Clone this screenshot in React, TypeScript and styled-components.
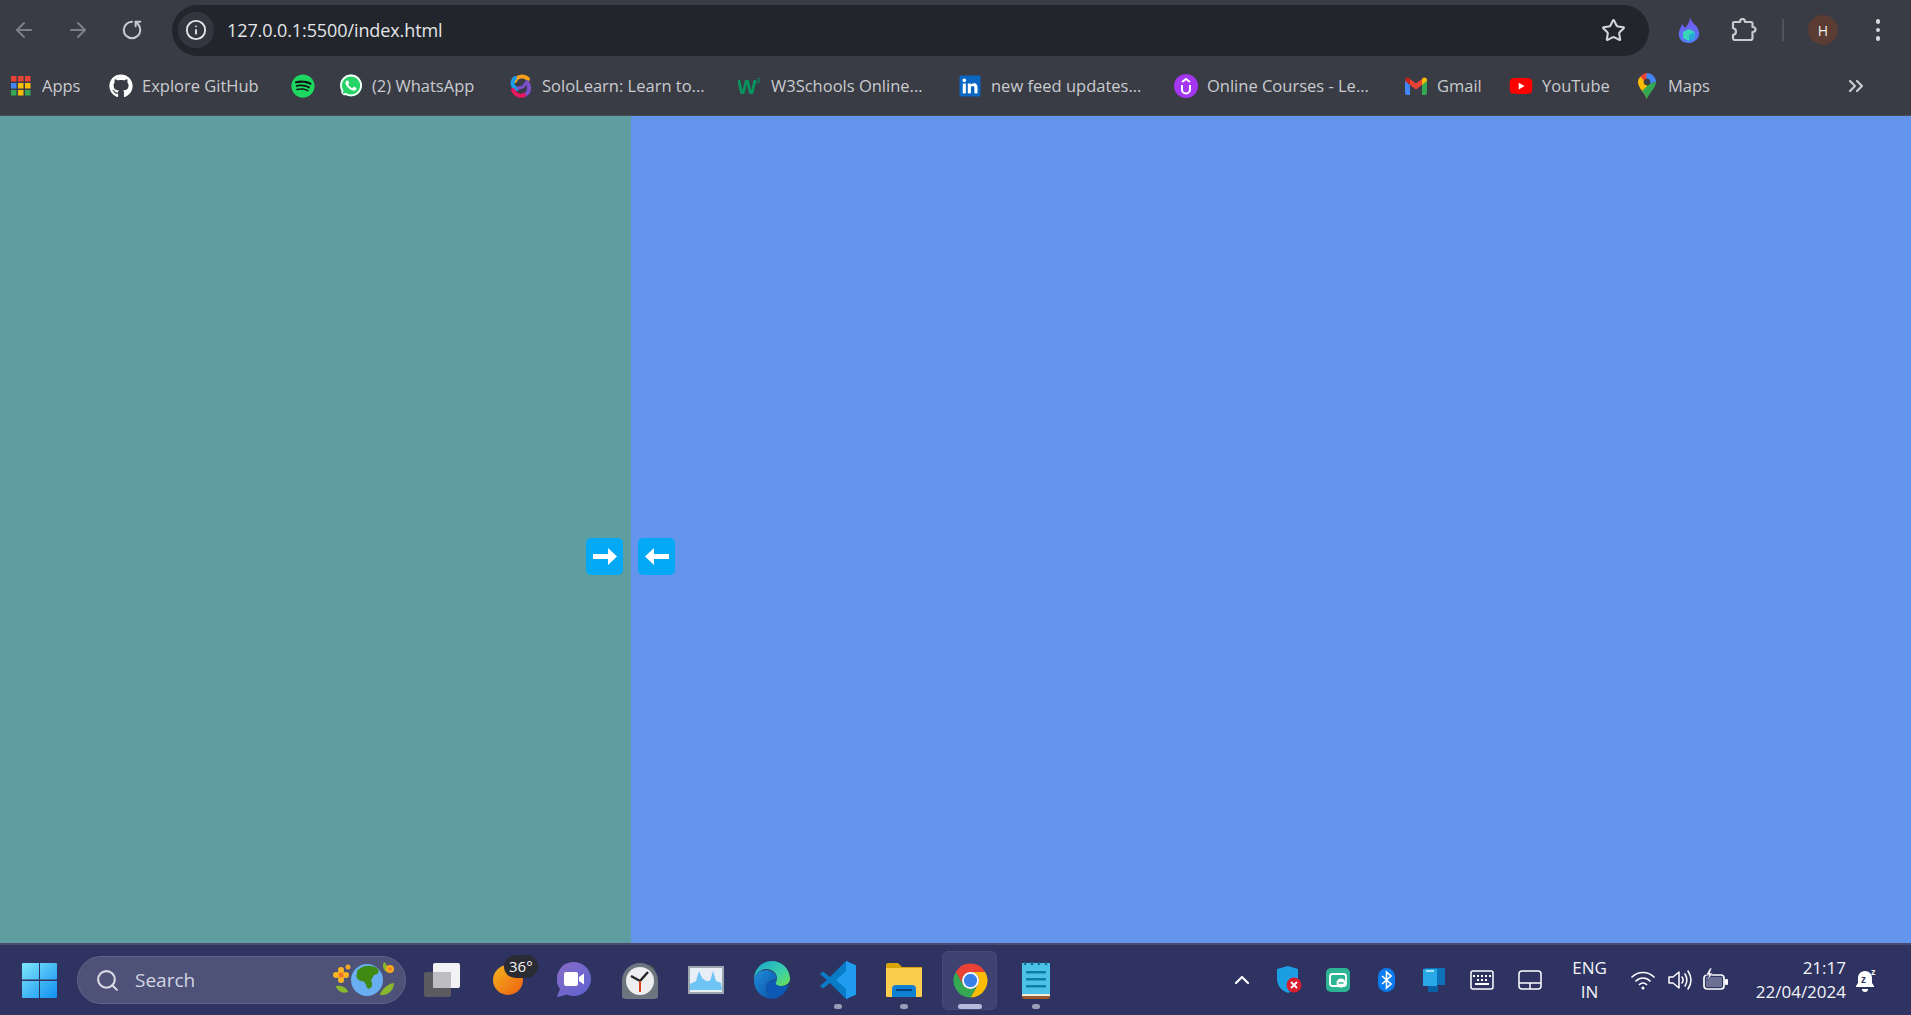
import React from "react";
import styled, { createGlobalStyle } from "styled-components";
import { ChevronUp, Search, RotateCw, ArrowLeft, ArrowRight, Star, ChevronsRight, Info } from "lucide-react";
import { FaGithub, FaSpotify, FaWhatsapp, FaLinkedin, FaYoutube } from "react-icons/fa";

const GlobalStyle = createGlobalStyle`
  html, body { margin: 0; padding: 0; height: 100%; overflow: hidden; }
  body { font-family: "Open Sans", "Noto Sans", sans-serif; }
  #root { height: 100vh; display: flex; flex-direction: column; }
`;

const Toolbar = styled.div`
  height: 60px;
  flex: none;
  display: flex;
  align-items: center;
  gap: 6px;
  background: #393c45;
`;
const NavButton = styled.div<{ $dim?: boolean }>`
  width: 48px;
  height: 48px;
  display: flex;
  align-items: center;
  justify-content: center;
  color: ${(p) => (p.$dim ? "#7c7f86" : "#c8cacf")};
`;
const AddressBar = styled.div`
  flex: 1;
  height: 51px;
  margin-left: 10px;
  padding: 0 6px;
  display: flex;
  align-items: center;
  background: #22252c;
  border-radius: 26px;
  color: #e6e8ec;
`;
const InfoChip = styled.div`
  width: 36px;
  height: 36px;
  border-radius: 50%;
  background: #33363e;
  display: flex;
  align-items: center;
  justify-content: center;
`;
const Url = styled.div`
  margin-left: 13px;
  flex: 1;
  font-size: 18px;
  letter-spacing: -0.1px;
  color: #e3e5e8;
`;
const StarSlot = styled.div`
  width: 48px;
  display: flex;
  justify-content: center;
  padding-right: 6px;
  color: #d4d6da;
`;
const Actions = styled.div`
  width: 262px;
  margin-left: -6px;
  flex: none;
  display: flex;
  align-items: center;
`;
const ActionSlot = styled.div<{ $w: number }>`
  width: ${(p) => p.$w}px;
  display: flex;
  justify-content: center;
  align-items: center;
`;
const Divider = styled.div`
  width: 2px;
  height: 22px;
  background: #50535c;
`;
const Avatar = styled.div`
  width: 30px;
  height: 30px;
  border-radius: 50%;
  background: #5b3c33;
  color: #f2eeee;
  display: flex;
  align-items: center;
  justify-content: center;
  font-size: 14px;
`;
const Dots = styled.div`
  display: flex;
  flex-direction: column;
  gap: 4px;
  padding-left: 6px;
  i {
    width: 4.5px;
    height: 4.5px;
    border-radius: 50%;
    background: #d6d8dc;
    display: block;
  }
`;

const BookmarkBar = styled.div`
  height: 56px;
  flex: none;
  display: flex;
  align-items: center;
  gap: 24px;
  padding: 0 0 4px 9px;
  box-sizing: border-box;
  background: #393c45;
  border-bottom: 1px solid #4a4d55;
  position: relative;
`;
const Bookmark = styled.div`
  display: flex;
  align-items: center;
  gap: 9px;
`;
const BookmarkIcon = styled.div`
  width: 24px;
  height: 24px;
  flex: none;
  display: flex;
  align-items: center;
  justify-content: center;
`;
const BookmarkLabel = styled.span<{ $w: number }>`
  width: ${(p) => p.$w}px;
  font-size: 16.5px;
  color: #c9cbcf;
  white-space: nowrap;
`;
const Overflow = styled.div`
  margin-left: auto;
  margin-right: 43px;
  color: #c9cbcf;
  display: flex;
`;

const Main = styled.div`
  flex: 1;
  display: flex;
  min-height: 0;
`;
const Panel = styled.div<{ $color: string; $wide?: boolean }>`
  position: relative;
  background: ${(p) => p.$color};
  ${(p) => (p.$wide ? "flex: 1;" : "width: 631px;")}
`;
const ArrowButton = styled.button<{ $side: "left" | "right" }>`
  position: absolute;
  top: 422px;
  ${(p) => (p.$side === "left" ? "right: 8px;" : "left: 7px;")}
  width: 37px;
  height: 37px;
  padding: 0;
  border: none;
  border-radius: 5px;
  background: #03a9f4;
  display: flex;
  align-items: center;
  justify-content: center;
`;

const Taskbar = styled.div`
  height: 72px;
  flex: none;
  display: flex;
  align-items: center;
  box-sizing: border-box;
  background: #2e3362;
  border-top: 2px solid #484b6e;
  color: #fff;
`;
const StartSlot = styled.div`
  width: 77px;
  flex: none;
  display: flex;
  padding-left: 22px;
  box-sizing: border-box;
`;
const SearchPill = styled.div`
  width: 329px;
  height: 48px;
  flex: none;
  margin-right: 3px;
  box-sizing: border-box;
  border: 1px solid #62658a;
  border-radius: 24px;
  background: #4e5279;
  display: flex;
  align-items: center;
  padding: 0 7px 0 17px;
  color: #d9dae4;
`;
const SearchText = styled.span`
  flex: 1;
  margin-left: 15px;
  font-size: 19px;
  color: #d5d6e2;
`;
const AppSlot = styled.div<{ $active?: boolean }>`
  position: relative;
  width: 66px;
  height: 60px;
  flex: none;
  display: flex;
  align-items: center;
  justify-content: center;
  &::before {
    content: "";
    display: ${(p) => (p.$active ? "block" : "none")};
    position: absolute;
    left: 5px;
    right: 6px;
    top: 1px;
    bottom: 0;
    background: #3e4270;
    border: 1px solid #464a76;
    border-radius: 6px;
  }
  svg {
    position: relative;
  }
`;
const RunDot = styled.span<{ $active?: boolean }>`
  position: absolute;
  bottom: 1px;
  left: 50%;
  transform: translateX(-50%);
  width: ${(p) => (p.$active ? 24 : 8)}px;
  height: 5px;
  border-radius: 3px;
  background: ${(p) => (p.$active ? "#b6bbdc" : "#9a9db6")};
`;
const TempBadge = styled.span`
  position: absolute;
  top: 5px;
  left: 29px;
  padding: 0 5px;
  height: 23px;
  line-height: 23px;
  font-size: 15px;
  border-radius: 12px;
  background: #2b2b33;
  color: #f3f3f3;
`;
const Spacer = styled.div`
  flex: 1;
`;
const TraySlot = styled.div<{ $w: number }>`
  width: ${(p) => p.$w}px;
  flex: none;
  display: flex;
  justify-content: center;
  align-items: center;
`;
const TwoLine = styled.div<{ $w: number; $align: string }>`
  width: ${(p) => p.$w}px;
  flex: none;
  display: flex;
  flex-direction: column;
  align-items: ${(p) => p.$align};
  font-size: 17px;
  line-height: 24px;
  color: #f4f4f8;
  white-space: nowrap;
`;
const BellSlot = styled.div`
  flex: none;
  width: 65px;
  padding-left: 10px;
  box-sizing: border-box;
  display: flex;
`;

const bookmarks = [
  { label: "Apps", w: 43, icon: <AppsIcon /> },
  { label: "Explore GitHub", w: 125, icon: <FaGithub size={24} color="#fff" /> },
  { icon: <FaSpotify size={24} color="#1ed760" style={{ background: "radial-gradient(circle, #111 60%, transparent 62%)", borderRadius: "50%" }} /> },
  {
    label: "(2) WhatsApp",
    w: 113,
    icon: <FaWhatsapp size={25} color="#fff" style={{ background: "radial-gradient(circle, #25d366 62%, transparent 65%)", borderRadius: "50%" }} />,
  },
  { label: "SoloLearn: Learn to...", w: 172, icon: <SoloIcon /> },
  { label: "W3Schools Online...", w: 163, icon: <W3Icon /> },
  {
    label: "new feed updates...",
    w: 159,
    icon: <FaLinkedin size={24} color="#0a66c2" style={{ background: "linear-gradient(#fff,#fff) center/70% 70% no-repeat" }} />,
  },
  { label: "Online Courses - Le...", w: 173, icon: <UdemyIcon /> },
  { label: "Gmail", w: 48, icon: <GmailIcon /> },
  {
    label: "YouTube",
    w: 69,
    icon: <FaYoutube size={24} color="#f00" style={{ background: "linear-gradient(#fff,#fff) center/40% 40% no-repeat" }} />,
  },
  { label: "Maps", w: 45, icon: <MapsIcon /> },
];

function AppsIcon() {
  const colors = ["#ea4335", "#ea4335", "#ea4335", "#4285f4", "#fbbc05", "#fbbc05", "#34a853", "#fbbc05", "#34a853"];
  return (
    <svg width="20" height="20" viewBox="0 0 20 20">
      {colors.map((c, i) => (
        <rect key={i} x={(i % 3) * 7} y={Math.floor(i / 3) * 7} width="5.5" height="5.5" fill={c} />
      ))}
    </svg>
  );
}
function SoloIcon() {
  return (
    <svg width="26" height="26" viewBox="0 0 24 24" fill="none" strokeWidth="4" strokeLinecap="round">
      <path d="M19 5C15 1 8 2 6 7" stroke="#f9a11b" />
      <path d="M6 4C2 8 3 13 8 15" stroke="#1e9be8" />
      <path d="M18 8c4 5 2 12-3 13" stroke="#7b4fc9" />
      <path d="M4 16c2 5 8 7 11 5" stroke="#e6175c" />
      <path d="M9 14c3 0 6-1 7-4" stroke="#7b4fc9" strokeWidth="3" />
    </svg>
  );
}
function W3Icon() {
  return (
    <svg width="24" height="22" viewBox="0 0 24 22">
      <text x="-1" y="19" fontFamily="'Liberation Sans', sans-serif" fontWeight="700" fontSize="21" fill="#04965f">W</text>
      <text x="18" y="8" fontFamily="'Liberation Sans', sans-serif" fontSize="8" fill="#04965f">3</text>
    </svg>
  );
}
function UdemyIcon() {
  return (
    <svg width="24" height="24" viewBox="0 0 24 24" fill="none">
      <circle cx="12" cy="12" r="12" fill="#a435f0" />
      <path d="M8 11v4.5a4 4 0 0 0 8 0V11" stroke="#fff" strokeWidth="2" />
      <path d="M8 8l4-3 4 3" stroke="#fff" strokeWidth="2" />
    </svg>
  );
}
function GmailIcon() {
  return (
    <svg width="22" height="18" viewBox="0 0 22 18" fill="none">
      <path d="M0 3v13a2 2 0 0 0 2 2h3V8z" fill="#4285f4" />
      <path d="M22 3v13a2 2 0 0 1-2 2h-3V8z" fill="#34a853" />
      <path d="M5 8l6 4.5L17 8V2l-6 4.5L5 2z" fill="#ea4335" />
      <path d="M0 3c0-2.5 3-3.5 5-1v6L0 4z" fill="#c5221f" />
      <path d="M22 3c0-2.5-3-3.5-5-1v6l5-4z" fill="#fbbc04" />
    </svg>
  );
}
function MapsIcon() {
  return (
    <svg width="18" height="26" viewBox="0 0 18 26">
      <path d="M9 26C7 20 0 15 0 9c0-2 1-4 2.5-5.500L9 9z" fill="#fbbc04" />
      <path d="M2.500 3.500C4 1.500 6.500 0 9 0l1 4-4 4z" fill="#ea4335" />
      <path d="M9 0c2.500 0 5 1 6.500 3L11 8 8 4z" fill="#4285f4" />
      <path d="M15.500 3C17 4.500 18 7 18 9L11 11l-1-4z" fill="#4285f4" />
      <path d="M18 9c0 6-7 11-9 17-1-3-3-6-5-8l7-7z" fill="#34a853" />
      <circle cx="9" cy="9" r="3.300" fill="#3a3d46" />
    </svg>
  );
}
function FlameIcon() {
  return (
    <svg width="22" height="26" viewBox="0 0 22 26">
      <defs>
        <linearGradient id="flame" x1="0" y1="0" x2="0" y2="1">
          <stop offset="0" stopColor="#7a54f2" />
          <stop offset="1" stopColor="#4f7df5" />
        </linearGradient>
      </defs>
      <path d="M12 0c1 5 4 6 7 10 3 5 3 10-1 13-2 2-4 3-7 3-5 0-9-2-10-7C0 14 3 11 4 7c1 1 2 3 3 4 3-3 5-7 5-11z" fill="url(#flame)" />
      <path d="M11 12l6 3v6l-6 3-6-3v-6z" fill="#38d6b8" />
      <path d="M11 18l6-3v6l-6 3z" fill="#28a8d8" />
    </svg>
  );
}
function PuzzleIcon() {
  return (
    <svg width="26" height="24" viewBox="0 0 26 24" fill="none" stroke="#c8cacf" strokeWidth="2.200" strokeLinejoin="round">
      <path d="M3 4h6c0-4 5-4 5 0h6a1.500 1.500 0 0 1 1.500 1.500V9c4 0 4 5 0 5v6a2 2 0 0 1-2 2H4a2 2 0 0 1-2-2v-3c4-1 4-6 0-7V5a1 1 0 0 1 1-1z" />
    </svg>
  );
}
function WindowsLogo() {
  return (
    <svg width="35" height="35" viewBox="0 0 35 35">
      <defs>
        <linearGradient id="win" x1="0" y1="0" x2="1" y2="1">
          <stop offset="0" stopColor="#7fe6fb" />
          <stop offset="1" stopColor="#0f8ff0" />
        </linearGradient>
      </defs>
      <path d="M1 0h16v16.500H0V1a1 1 0 0 1 1-1zM18 0h16a1 1 0 0 1 1 1v15.500H18zM0 18h17v17H1a1 1 0 0 1-1-1zM18 18h17v16a1 1 0 0 1-1 1H18z" fill="url(#win)" />
    </svg>
  );
}
function EarthIcon() {
  return (
    <svg width="68" height="36" viewBox="0 0 68 36">
      <circle cx="11" cy="13" r="4" fill="#f7a41d" />
      <circle cx="6" cy="13" r="3" fill="#fbb524" />
      <circle cx="16" cy="13" r="3" fill="#fbb524" />
      <circle cx="11" cy="8" r="3" fill="#fbb524" />
      <circle cx="11" cy="18" r="3" fill="#fbb524" />
      <circle cx="11" cy="13" r="2.500" fill="#f0762a" />
      <circle cx="18" cy="5" r="2.500" fill="#f8a81f" />
      <path d="M6 24c6-1 11 2 12 6-6 2-11-1-12-6z" fill="#8ab82c" />
      <circle cx="37" cy="18" r="16" fill="#69aef0" />
      <path d="M27 9c5-6 15-7 21-2 2 3-1 6-4 6-1 3-4 4-2 8 1 4-3 7-5 5-1-4-2-7-6-7-3-1-6-4-4-7z" fill="#3f8a13" />
      <path d="M54 0c3 2 4 6 3 10-4-2-5-6-3-10zM50 33c1-5 7-11 14-12 0 7-6 13-14 12z" fill="#8ab82c" />
      <circle cx="60" cy="7" r="4" fill="#f8a81f" />
      <circle cx="60" cy="7" r="1.800" fill="#ef7b2b" />
    </svg>
  );
}
function TaskViewIcon() {
  return (
    <svg width="36" height="34" viewBox="0 0 36 34">
      <rect x="0" y="9" width="27" height="25" rx="2" fill="#5b5b5f" />
      <rect x="9" y="0" width="27" height="25" rx="2" fill="#f2f2f4" />
      <rect x="9" y="9" width="18" height="16" fill="#bdbdc2" />
    </svg>
  );
}
function SunIcon() {
  return (
    <svg width="30" height="30" viewBox="0 0 30 30">
      <defs>
        <linearGradient id="sun" x1="0" y1="0" x2="1" y2="1">
          <stop offset="0" stopColor="#f4b51f" />
          <stop offset="1" stopColor="#ee5f0f" />
        </linearGradient>
      </defs>
      <circle cx="15" cy="15" r="15" fill="url(#sun)" />
    </svg>
  );
}
function MeetIcon() {
  return (
    <svg width="34" height="36" viewBox="0 0 34 36">
      <defs>
        <linearGradient id="meet" x1="0" y1="0" x2="1" y2="1">
          <stop offset="0" stopColor="#8a6cc8" />
          <stop offset="1" stopColor="#5c62d0" />
        </linearGradient>
      </defs>
      <path d="M17 0a17 17 0 1 1-7 32.500L1 35c-1 .3-1-.5-.7-1L3 27A17 17 0 0 1 17 0z" fill="url(#meet)" />
      <rect x="7" y="10" width="14" height="14" rx="2" fill="#fff" />
      <path d="M22 15l5-3.500v11L22 19z" fill="#fff" />
    </svg>
  );
}
function ClockIcon() {
  return (
    <svg width="36" height="37" viewBox="0 0 36 37">
      <path d="M28 2l5 4-2 3-5-4z" fill="#3d4046" />
      <path d="M18 1c10 0 18 8 18 18v15a3 3 0 0 1-3 3H3a3 3 0 0 1-3-3V19C0 9 8 1 18 1z" fill="#6d767e" />
      <circle cx="18" cy="19" r="14" fill="#eeeef0" />
      <path d="M18 19L9 14M18 19l8-9" stroke="#25272b" strokeWidth="2.500" />
      <path d="M18 19v11" stroke="#d8421a" strokeWidth="2" />
    </svg>
  );
}
function ResourceIcon() {
  return (
    <svg width="36" height="28" viewBox="0 0 36 28">
      <rect x="0" y="0" width="36" height="28" fill="#9ba6b1" />
      <rect x="2" y="2" width="32" height="24" fill="#e8eef6" />
      <path d="M2 24V18l6-3 3-10 3 7 4 3 4 0 3-10 3 10 5 2 1 7z" fill="#6ec4f4" />
    </svg>
  );
}
function EdgeIcon() {
  return (
    <svg width="36" height="38" viewBox="0 0 36 38">
      <defs>
        <linearGradient id="edgeA" x1="0" y1="0" x2="1" y2="1">
          <stop offset="0" stopColor="#18a4d2" />
          <stop offset="0.6" stopColor="#3bd0a8" />
          <stop offset="1" stopColor="#6fe04f" />
        </linearGradient>
        <linearGradient id="edgeB" x1="0" y1="0" x2="1" y2="1">
          <stop offset="0" stopColor="#1f8ed8" />
          <stop offset="1" stopColor="#0c4fa8" />
        </linearGradient>
      </defs>
      <path d="M18 0c10 0 18 8 18 18 0 4-4 7-9 7-4 0-6-1-6-3 0-1 2-1 2-5 0-5-5-9-11-9C7 8 1 13 0 19 0 8 8 0 18 0z" fill="url(#edgeA)" />
      <path d="M0 19C1 13 6 9 12 9c6 0 11 4 11 9-5 1-12 3-11 10 0 4 3 8 7 10C8 38 0 30 0 19z" fill="url(#edgeB)" />
      <path d="M12 27c0-5 5-8 10-8 1 1-1 3 0 4 2 3 9 3 13 0-2 8-9 14-16 15-4-2-7-6-7-11z" fill="#0c59b5" />
    </svg>
  );
}
function VsCodeIcon() {
  return (
    <svg width="36" height="38" viewBox="0 0 36 38">
      <path d="M26 0l10 4.500v29L26 38 10 22 3 27.500 0 25l7-6-7-6 3-2.500L10 16z" fill="#0a7cc7" />
      <path d="M26 0l10 4.500v29L26 38zM26 10l-10 9 10 9z" fill="#1f9cf0" fillRule="evenodd" />
    </svg>
  );
}
function FolderIcon() {
  return (
    <svg width="36" height="34" viewBox="0 0 36 34">
      <path d="M0 2a2 2 0 0 1 2-2h10l4 4h20v8H0z" fill="#dba30a" />
      <rect x="0" y="5" width="36" height="29" rx="1" fill="#fdcd4f" />
      <path d="M6 34V26a4 4 0 0 1 4-4h16a4 4 0 0 1 4 4v8z" fill="#0e7fd1" />
      <rect x="10" y="26" width="16" height="2" fill="#083f7d" />
    </svg>
  );
}
function ChromeIcon() {
  return (
    <svg width="37" height="37" viewBox="0 0 24 24">
      <path d="M2.470 6.500A11 11 0 0 1 21.530 6.500H12a5.500 5.500 0 0 0-4.760 8.250z" fill="#ea4335" />
      <path d="M21.530 6.500A11 11 0 0 1 12 23l4.760-8.250A5.500 5.500 0 0 0 12 6.500z" fill="#fbbc04" />
      <path d="M12 23A11 11 0 0 1 2.470 6.500l4.770 8.250a5.500 5.500 0 0 0 9.520 0z" fill="#34a853" />
      <circle cx="12" cy="12" r="5.500" fill="#fff" />
      <circle cx="12" cy="12" r="4.300" fill="#3a7fe8" />
    </svg>
  );
}
function NotepadIcon() {
  return (
    <svg width="28" height="38" viewBox="0 0 28 38">
      <rect x="0" y="2" width="28" height="32" fill="#4cc2e6" />
      <path d="M0 34h28v2a2 2 0 0 1-2 2H2a2 2 0 0 1-2-2z" fill="#9a5a2e" />
      <rect x="0" y="33" width="28" height="2" fill="#f3e8dc" />
      {[3, 10, 17, 24].map((x) => (
        <path key={x} d="M0 4l1.500-4L3 4z" transform={`translate(${x - 1.5} 0)`} fill="#0d6f93" />
      ))}
      {[10, 17, 24].map((y) => (
        <rect key={y} x="4" y={y} width="20" height="2.500" fill="#0c7fa6" />
      ))}
    </svg>
  );
}
function DefenderIcon() {
  return (
    <svg width="26" height="28" viewBox="0 0 26 28">
      <path d="M11 0l10 3v10c0 7-5 12-10 14C5 25 0 20 0 13V3z" fill="#1b9ee2" />
      <circle cx="17" cy="19" r="7.500" fill="#d81f2e" />
      <path d="M14 16l6 6M20 16l-6 6" stroke="#fff" strokeWidth="1.800" />
    </svg>
  );
}
function GreenAppIcon() {
  return (
    <svg width="24" height="24" viewBox="0 0 24 24" fill="none">
      <rect width="24" height="24" rx="5" fill="#2cb494" />
      <rect x="4" y="6" width="16" height="12" rx="2.500" stroke="#fff" strokeWidth="1.800" />
      <circle cx="15" cy="15" r="4.500" fill="#fff" />
      <path d="M12.500 15h5" stroke="#2cb494" strokeWidth="1.500" />
    </svg>
  );
}
function BluetoothIcon() {
  return (
    <svg width="17" height="24" viewBox="0 0 17 24" fill="none">
      <rect width="17" height="24" rx="8.500" fill="#0b7df0" />
      <path d="M4 8l9 8-4.500 4V4L13 8l-9 8" stroke="#fff" strokeWidth="1.600" />
    </svg>
  );
}
function BlueDeviceIcon() {
  return (
    <svg width="22" height="24" viewBox="0 0 22 24">
      <rect x="2" y="0" width="20" height="17" fill="#0e72b8" />
      <rect x="0" y="1" width="14" height="17" fill="#28a9e6" />
      <rect x="3" y="2" width="8" height="2" fill="#a5e0f8" />
      <rect x="5" y="18" width="10" height="6" fill="#0b5fa5" />
    </svg>
  );
}
function KeyboardIcon() {
  return (
    <svg width="24" height="20" viewBox="0 0 24 20" fill="none">
      <rect x="1" y="1" width="22" height="18" rx="2" stroke="#fff" strokeWidth="1.500" />
      {[4, 8, 12, 16, 20].map((x) => (
        <rect key={x} x={x - 1} y="5" width="2" height="2" fill="#fff" />
      ))}
      {[7, 11, 15].map((x) => (
        <rect key={x} x={x} y="9" width="2" height="2" fill="#fff" />
      ))}
      <rect x="5" y="13" width="14" height="2" fill="#fff" />
    </svg>
  );
}
function TouchpadIcon() {
  return (
    <svg width="24" height="20" viewBox="0 0 24 20" fill="none" stroke="#fff" strokeWidth="1.500">
      <rect x="1" y="1" width="22" height="18" rx="3" />
      <path d="M1 13h22M12 13v6" />
    </svg>
  );
}
function WifiIcon() {
  return (
    <svg width="24" height="20" viewBox="0 0 24 20" fill="none" stroke="#fff" strokeWidth="1.700" strokeLinecap="round">
      <path d="M1 7c6-6 16-6 22 0M5 11c4-4 10-4 14 0M8.500 14.500c2-2 5-2 7 0" />
      <circle cx="12" cy="18" r="1.500" fill="#fff" stroke="none" />
    </svg>
  );
}
function VolumeIcon() {
  return (
    <svg width="24" height="24" viewBox="0 0 24 24" fill="none" stroke="#fff" strokeWidth="1.500" strokeLinecap="round">
      <path d="M1 9h4l6-5v16l-6-5H1z" strokeLinejoin="round" />
      <path d="M14 9c1.500 2 1.500 4 0 6M17 6c2.500 4 2.500 8 0 12M20 3c4 6 4 12 0 18" />
    </svg>
  );
}
function BatteryIcon() {
  return (
    <svg width="26" height="24" viewBox="0 0 26 24" fill="none">
      <rect x="1" y="7" width="20" height="14" rx="3" stroke="#fff" strokeWidth="1.700" />
      <rect x="22" y="11" width="3" height="6" rx="1" fill="#fff" />
      <rect x="3" y="9" width="16" height="10" fill="#b9bcd0" fillOpacity=".45" />
      <path d="M7 0L3 7h3l-2 6 6-8H7l2-5z" fill="#fff" stroke="#2e3362" strokeWidth=".6" />
    </svg>
  );
}
function SnoozeBell() {
  return (
    <svg width="22" height="24" viewBox="0 0 22 24">
      <path d="M9 3c4 0 7 3 7 7v5l2 3v1H0v-1l2-3v-5c0-4 3-7 7-7z" fill="#fff" />
      <path d="M6 21h6a3 3 0 0 1-6 0z" fill="#fff" />
      <text x="5" y="15" fontSize="10" fontWeight="700" fontFamily="'Liberation Sans', sans-serif" fill="#2e3362">z</text>
      <text x="15" y="7" fontSize="9" fontWeight="700" fontFamily="'Liberation Sans', sans-serif" fill="#fff">z</text>
    </svg>
  );
}
function BigArrow({ flip }: { flip?: boolean }) {
  return (
    <svg width="24" height="17" viewBox="0 0 24 17" style={flip ? { transform: "scaleX(-1)" } : undefined}>
      <polygon points="0,6 15,6 15,0 24,8.500 15,17 15,11 0,11" fill="#fff" />
    </svg>
  );
}

const apps = [
  { icon: <TaskViewIcon /> },
  { icon: <SunIcon />, badge: "36°" },
  { icon: <MeetIcon /> },
  { icon: <ClockIcon /> },
  { icon: <ResourceIcon /> },
  { icon: <EdgeIcon /> },
  { icon: <VsCodeIcon />, dot: true },
  { icon: <FolderIcon />, dot: true },
  { icon: <ChromeIcon />, dot: true, active: true },
  { icon: <NotepadIcon />, dot: true },
];

export default function App() {
  return (
    <>
      <GlobalStyle />
      <Toolbar>
        <NavButton $dim>
          <ArrowLeft size={24} strokeWidth={2} />
        </NavButton>
        <NavButton $dim>
          <ArrowRight size={24} strokeWidth={2} />
        </NavButton>
        <NavButton>
          <RotateCw size={22} strokeWidth={2.2} style={{ transform: "scaleX(-1) rotate(-90deg)" }} />
        </NavButton>
        <AddressBar>
          <InfoChip>
            <Info size={22} strokeWidth={2} color="#e6e8ec" />
          </InfoChip>
          <Url>127.0.0.1:5500/index.html</Url>
          <StarSlot>
            <Star size={25} strokeWidth={2} />
          </StarSlot>
        </AddressBar>
        <Actions>
          <ActionSlot $w={80}>
            <FlameIcon />
          </ActionSlot>
          <ActionSlot $w={30}>
            <PuzzleIcon />
          </ActionSlot>
          <ActionSlot $w={48}>
            <Divider />
          </ActionSlot>
          <ActionSlot $w={32}>
            <Avatar>H</Avatar>
          </ActionSlot>
          <ActionSlot $w={72}>
            <Dots>
              <i />
              <i />
              <i />
            </Dots>
          </ActionSlot>
        </Actions>
      </Toolbar>
      <BookmarkBar>
        {bookmarks.map((b, i) => (
          <Bookmark key={i}>
            <BookmarkIcon>{b.icon}</BookmarkIcon>
            {b.label && <BookmarkLabel $w={b.w!}>{b.label}</BookmarkLabel>}
          </Bookmark>
        ))}
        <Overflow>
          <ChevronsRight size={24} strokeWidth={2.2} />
        </Overflow>
      </BookmarkBar>
      <Main>
        <Panel $color="#5f9ea0">
          <ArrowButton $side="left">
            <BigArrow />
          </ArrowButton>
        </Panel>
        <Panel $color="#6495ed" $wide>
          <ArrowButton $side="right">
            <BigArrow flip />
          </ArrowButton>
        </Panel>
      </Main>
      <Taskbar>
        <StartSlot>
          <WindowsLogo />
        </StartSlot>
        <SearchPill>
          <Search size={25} strokeWidth={2} />
          <SearchText>Search</SearchText>
          <EarthIcon />
        </SearchPill>
        {apps.map((a, i) => (
          <AppSlot key={i} $active={a.active}>
            {a.icon}
            {a.badge && <TempBadge>{a.badge}</TempBadge>}
            {a.dot && <RunDot $active={a.active} />}
          </AppSlot>
        ))}
        <Spacer />
        <TraySlot $w={48}>
          <ChevronUp size={24} strokeWidth={2.2} />
        </TraySlot>
        <TraySlot $w={48}>
          <DefenderIcon />
        </TraySlot>
        <TraySlot $w={48}>
          <GreenAppIcon />
        </TraySlot>
        <TraySlot $w={48}>
          <BluetoothIcon />
        </TraySlot>
        <TraySlot $w={48}>
          <BlueDeviceIcon />
        </TraySlot>
        <TraySlot $w={48}>
          <KeyboardIcon />
        </TraySlot>
        <TraySlot $w={48}>
          <TouchpadIcon />
        </TraySlot>
        <TwoLine $w={71} $align="center">
          <span>ENG</span>
          <span>IN</span>
        </TwoLine>
        <TraySlot $w={36}>
          <WifiIcon />
        </TraySlot>
        <TraySlot $w={37}>
          <VolumeIcon />
        </TraySlot>
        <TraySlot $w={36}>
          <BatteryIcon />
        </TraySlot>
        <TwoLine $w={112} $align="flex-end">
          <span>21:17</span>
          <span>22/04/2024</span>
        </TwoLine>
        <BellSlot>
          <SnoozeBell />
        </BellSlot>
      </Taskbar>
    </>
  );
}
